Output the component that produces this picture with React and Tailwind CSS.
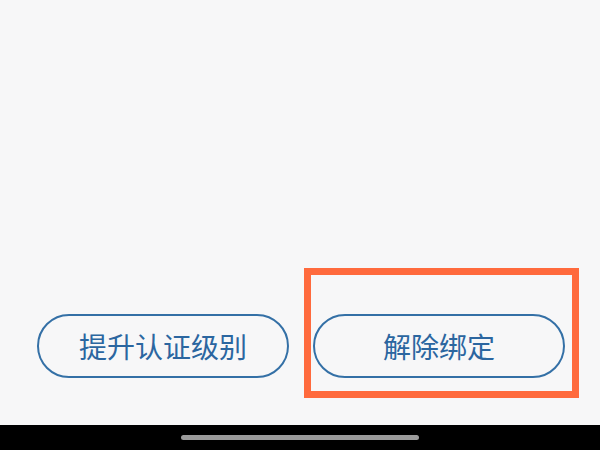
const OutlineButton = ({ label }) => {
    return (
        <button className="w-[252px] h-[64px] rounded-full border-2 border-[#3470a6] bg-transparent text-[28px] leading-none text-[#2b66a0] flex items-center justify-center">
            {label}
        </button>
    )
}

const App = () => {
    return (
        <div className="relative w-[600px] h-[450px] flex flex-col bg-[#f7f7f8] overflow-hidden" style={{ fontFamily: '"Noto Sans CJK SC", "Noto Sans", sans-serif' }}>
            <div className="flex-1"></div>

            <div className="flex gap-[24px] pl-[37px] pb-[47px]">
                <OutlineButton label="提升认证级别" />
                <OutlineButton label="解除绑定" />
            </div>

            <div className="h-[25px] bg-black flex items-center justify-center">
                <div className="w-[238px] h-[5px] rounded-full bg-[#9b9b9b]"></div>
            </div>

            {/* highlight box drawn over the second button */}
            <div className="absolute left-[304px] top-[268px] w-[275px] h-[130px] border-[7px] border-[#ff6a3d] pointer-events-none"></div>
        </div>
    )
}

export default App;
